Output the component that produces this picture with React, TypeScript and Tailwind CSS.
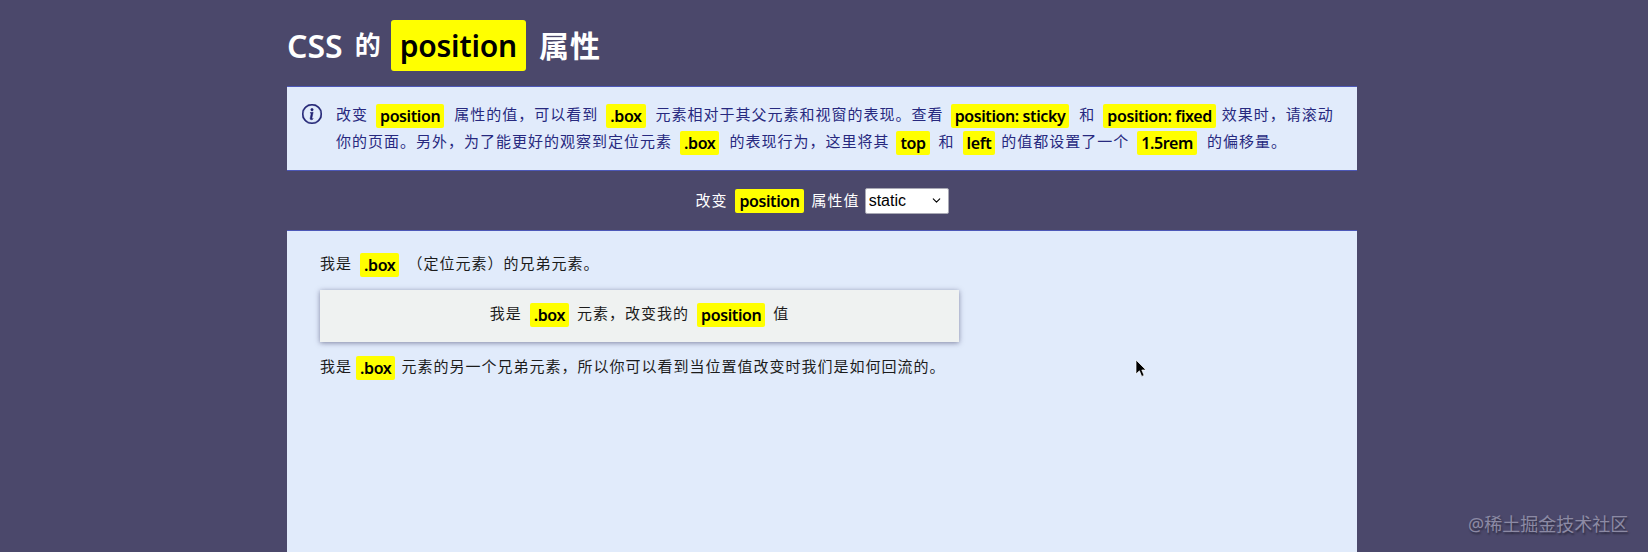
import { BsInfoCircle } from "react-icons/bs";
import { ChevronDown } from "lucide-react";

const sans = "font-['Noto_Sans','Noto_Sans_CJK_SC',sans-serif]";

const Code = (props: { children: string; className?: string }) => {
  return (
    <code
      className={`inline-block h-[24px] rounded-[2px] bg-[#ffff00] px-[4px] align-middle font-['Noto_Sans',sans-serif] text-[16px] leading-[24px] font-semibold tracking-[-0.4px] text-black ${props.className ?? "mx-[8px]"}`}
    >
      {props.children}
    </code>
  );
};

export default function App() {
  return (
    <div className={`relative h-[552px] overflow-hidden bg-[#4b486b] ${sans}`}>
      <div className="ml-[287px] w-[1070px]">
        <h1 className="flex h-[86px] items-center pt-[5px] text-[26px] font-semibold text-white">
          <span className="text-[32px] leading-none">CSS</span>
          <span className="ml-[12px]">的</span>
          <code className="mr-[13px] ml-[10px] flex h-[51px] items-center rounded-[3px] bg-[#ffff00] px-[9px] font-['Noto_Sans',sans-serif] text-[30px] font-semibold tracking-[-0.2px] text-black">
            position
          </code>
          <span className="text-[30px] tracking-[1px]">属性</span>
        </h1>

        <div className="flex h-[85px] border-y border-[#4d58b8] bg-[#e1ebfb] pt-[14px] pl-[15px] text-[#27297f]">
          <BsInfoCircle className="mt-[3px] h-[20px] w-[20px] shrink-0 stroke-[0.4] text-[#1e2072]" />
          <p className="ml-[14px] text-[15px] leading-[26px] tracking-[1px] whitespace-nowrap">
            改变<Code className="mr-[10px] ml-[8px]">position</Code>属性的值，可以看到<Code className="mr-[10px] ml-[8px]">.box</Code>元素相对于其父元素和视窗的表现。查看
            <Code className="mr-[10px] ml-[7px]">position: sticky</Code>和<Code className="mr-[6px] ml-[8px]">position: fixed</Code>效果时，请滚动
            <br />
            你的页面。另外，为了能更好的观察到定位元素<Code className="mr-[10px] ml-[8px]">.box</Code>的表现行为，这里将其<Code className="mr-[9px] ml-[7px]">top</Code>和
            <Code className="mr-[6px] ml-[8px]">left</Code>的值都设置了一个<Code className="mr-[10px] ml-[8px]">1.5rem</Code>的偏移量。
          </p>
        </div>

        <div className="flex h-[59px] items-center justify-center text-[15px] tracking-[1px] text-white">
          改变<Code>position</Code>属性值
          <div className="relative ml-[5px] h-[26px] w-[84px]">
            <select className="h-full w-full appearance-none rounded-[2px] border border-[#a9a9b5] bg-white pl-[3px] font-['Liberation_Sans',sans-serif] text-[16px] tracking-normal text-black">
              <option>static</option>
            </select>
            <ChevronDown className="pointer-events-none absolute top-[6px] right-[6px] h-[13px] w-[13px] text-black" />
          </div>
        </div>

        <div className="h-[322px] border-t border-[#4d58b8] bg-[#e1ebfb] px-[33px] pt-[19px] text-[15px] tracking-[1px] text-[#1c1c1c]">
          <p className="leading-[26px]">
            我是<Code>.box</Code>（定位元素）的兄弟元素。
          </p>
          <div className="mt-[13px] flex h-[52px] w-[639px] items-center justify-center bg-[#eff2f1] pb-[2px] shadow-[0_1px_5px_rgba(50,50,90,0.55)]">
            <span>
              我是<Code>.box</Code>元素，改变我的<Code>position</Code>值
            </span>
          </div>
          <p className="mt-[11px] leading-[26px]">
            我是<Code className="mr-[6px] ml-[4px]">.box</Code>元素的另一个兄弟元素，所以你可以看到当位置值改变时我们是如何回流的。
          </p>
        </div>
      </div>

      {/* mouse pointer */}
      <svg className="absolute top-[359px] left-[1135px] h-[19px] w-[12px]" viewBox="0 0 12 19">
        <path d="M1 1v14l3.4-3.2 2.3 5.6 2.4-1-2.3-5.4H11z" fill="#000" stroke="#fff" strokeWidth="0.7" />
      </svg>

      {/* watermark */}
      <div className="absolute top-[512px] left-[1468px] text-[18px] leading-[24px] text-[#8c8aa4] [text-shadow:1px_2px_2px_rgba(0,0,0,0.4)]">
        @稀土掘金技术社区
      </div>
    </div>
  );
}
